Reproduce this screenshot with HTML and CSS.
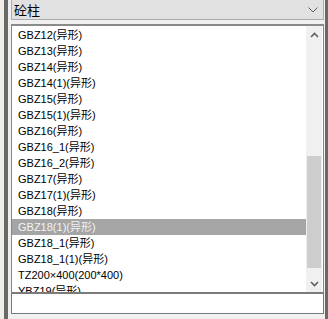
FILE: index.html
```html
<!DOCTYPE html>
<html lang="zh-CN">
<head>
    <meta charset="UTF-8">
    <title>砼柱</title>
    <link rel="stylesheet" href="styles.css">
</head>
<body>
    <div class="frame">
        <div class="edge"></div>
        <div class="bar"></div>
        <div class="panel">
            <div class="combo">
                <span class="combo-text">砼柱</span>
                <svg class="combo-arrow" width="10" height="6" viewBox="0 0 10 6">
                    <path d="M0.5 0.5 L5 5 L9.5 0.5" fill="none" stroke="#606060" stroke-width="1"/>
                </svg>
            </div>
            <div class="list">
                <div class="items">
                    <div class="item">GBZ12(异形)</div>
                    <div class="item">GBZ13(异形)</div>
                    <div class="item">GBZ14(异形)</div>
                    <div class="item">GBZ14(1)(异形)</div>
                    <div class="item">GBZ15(异形)</div>
                    <div class="item">GBZ15(1)(异形)</div>
                    <div class="item">GBZ16(异形)</div>
                    <div class="item">GBZ16_1(异形)</div>
                    <div class="item">GBZ16_2(异形)</div>
                    <div class="item">GBZ17(异形)</div>
                    <div class="item">GBZ17(1)(异形)</div>
                    <div class="item">GBZ18(异形)</div>
                    <div class="item selected">GBZ18(1)(异形)</div>
                    <div class="item">GBZ18_1(异形)</div>
                    <div class="item">GBZ18_1(1)(异形)</div>
                    <div class="item">TZ200×400(200*400)</div>
                    <div class="item">YBZ19(异形)</div>
                </div>
                <div class="scrollbar">
                    <div class="sb-btn">
                        <svg width="9" height="6" viewBox="0 0 9 6">
                            <path d="M1 5 L4.5 1.5 L8 5" fill="none" stroke="#606060" stroke-width="1.6"/>
                        </svg>
                    </div>
                    <div class="sb-track">
                        <div class="sb-thumb"></div>
                    </div>
                    <div class="sb-btn">
                        <svg width="9" height="6" viewBox="0 0 9 6">
                            <path d="M1 1 L4.5 4.5 L8 1" fill="none" stroke="#606060" stroke-width="1.6"/>
                        </svg>
                    </div>
                </div>
            </div>
            <div class="input"></div>
        </div>
        <div class="bar bar-right"></div>
    </div>
</body>
</html>
```

FILE: styles.css
```css
html, body {
    margin: 0;
    padding: 0;
}

body {
    width: 328px;
    height: 319px;
    overflow: hidden;
    background: #f0f0f0;
    font-family: "Liberation Sans", "Noto Sans CJK SC", sans-serif;
}

.frame {
    display: flex;
    height: 319px;
}

.edge {
    width: 4px;
    background: #f0efe9;
}

.bar {
    width: 4px;
    background: #696969;
}

.bar-right {
    width: 3px;
}

.panel {
    flex: 1;
    display: flex;
    flex-direction: column;
    padding-left: 3px;
    padding-right: 1px;
    background: #f0f0f0;
}

.combo {
    height: 19px;
    margin-top: -1px;
    border: 1px solid #adadad;
    background: #e1e1e1;
    display: flex;
    align-items: center;
    justify-content: space-between;
    padding: 0 5px 0 2px;
}

.combo-text {
    font-size: 13px;
    color: #000;
    font-family: "Noto Sans CJK SC", sans-serif;
}

.list {
    margin-top: 4px;
    height: 266px;
    border: 1px solid #828790;
    border-top: 2px solid #8a8a8a;
    border-bottom: 2px solid #7a7a7a;
    background: #fff;
    display: flex;
}

.items {
    flex: 1;
    overflow: hidden;
    padding-top: 1px;
}

.item {
    height: 16px;
    line-height: 16px;
    padding-left: 6px;
    font-size: 11px;
    color: #000;
    white-space: nowrap;
}

.item.selected {
    background: #a5a5a5;
    color: #f4f4f4;
}

.scrollbar {
    width: 16px;
    margin-right: 1px;
    display: flex;
    flex-direction: column;
    background: #f0f0f0;
}

.sb-btn {
    height: 17px;
    display: flex;
    align-items: center;
    justify-content: center;
}

.sb-track {
    flex: 1;
    display: flex;
    flex-direction: column;
    justify-content: flex-end;
}

.sb-thumb {
    height: 112px;
    margin: 0 1px 7px;
    background: #cdcdcd;
}

.input {
    height: 19px;
    border: 1px solid #7a7a7a;
    border-top: none;
    background: #fff;
}
```
